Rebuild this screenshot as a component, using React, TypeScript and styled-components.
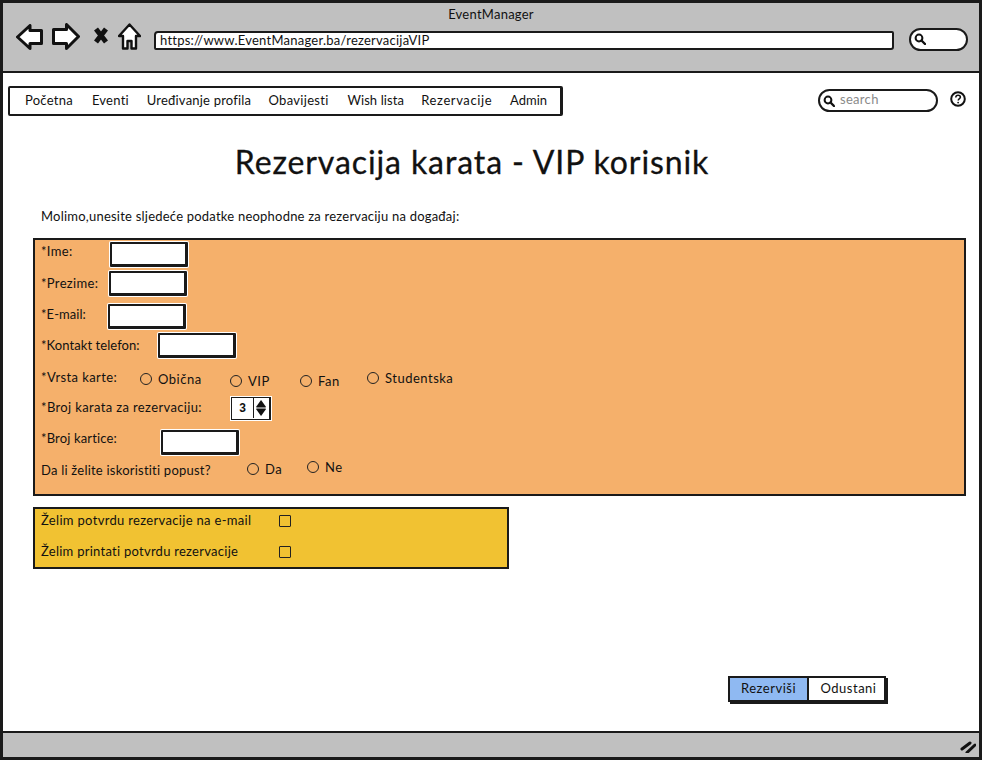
import styled, { createGlobalStyle } from "styled-components";

const GlobalStyle = createGlobalStyle`
  * {
    box-sizing: border-box;
  }
  body {
    margin: 0;
    overflow: hidden;
    background: #fff;
    font-family: "Lato", "Noto Sans", sans-serif;
    color: #111;
  }
`;

const Browser = styled.div`
  width: 982px;
  height: 760px;
  border: 3px solid #1a1a1a;
  display: flex;
  flex-direction: column;
`;
const Chrome = styled.header`
  height: 70px;
  background: #c0c0c0;
  border-bottom: 2px solid #1a1a1a;
  flex-shrink: 0;
`;
const WindowTitle = styled.div`
  text-align: center;
  font-size: 13px;
  line-height: 16px;
  padding-top: 3px;
  letter-spacing: 0.25px;
`;
const Toolbar = styled.div`
  display: flex;
  align-items: center;
  padding: 2px 10px 0 13px;
  height: 32px;
`;
const IconButton = styled.svg<{ $gap: number }>`
  flex-shrink: 0;
  margin: -5px ${(p) => p.$gap}px 0 0;
`;
const AddressBar = styled.div`
  width: 740px;
  height: 19px;
  margin: 3px 15px 0 0;
  background: #fff;
  border: 2px solid #1a1a1a;
  border-radius: 4px 2px 3px 2px;
  font-size: 13px;
  line-height: 14px;
  padding-left: 4px;
  letter-spacing: 0.24px;
  white-space: nowrap;
`;
const PillSearch = styled.div<{ $w: number }>`
  width: ${(p) => p.$w}px;
  height: 23px;
  background: #fff;
  border: 2px solid #1a1a1a;
  border-radius: 12px;
  display: flex;
  align-items: center;
  padding-left: 3px;
  gap: 5px;
  flex-shrink: 0;
`;
const SearchHint = styled.span`
  color: #8a8a8a;
  font-size: 13px;
  line-height: 16px;
  margin-top: -4px;
  letter-spacing: 0.3px;
`;
const Page = styled.main`
  flex: 1;
  background: #fff;
  display: flex;
  flex-direction: column;
  min-height: 0;
`;
const TopRow = styled.div`
  display: flex;
  align-items: flex-start;
  padding: 13px 0 0 5px;
`;
const Nav = styled.nav`
  width: 555px;
  height: 30px;
  border: 2px solid #1a1a1a;
  border-right-width: 3px;
  border-radius: 2px;
  display: flex;
  align-items: center;
  padding: 0 0 2px 15px;
  flex-shrink: 0;
  margin-right: 255px;
`;
const NavItem = styled.span<{ $w: number; $ls: number }>`
  width: ${(p) => p.$w}px;
  font-size: 13px;
  white-space: nowrap;
  letter-spacing: ${(p) => p.$ls}px;
`;
const HelpIcon = styled.svg`
  margin: 4px 0 0 12px;
  flex-shrink: 0;
`;
const SearchSlot = styled.div`
  margin-top: 3px;
`;
const Title = styled.h1`
  margin: 26px 0 0;
  padding-right: 38px;
  text-align: center;
  font-size: 32px;
  line-height: 40px;
  font-weight: 400;
  letter-spacing: 0.9px;
  -webkit-text-stroke: 0.3px #111;
`;
const Intro = styled.p`
  margin: 26px 0 14px 38px;
  font-size: 13px;
  line-height: 16px;
  letter-spacing: 0.22px;
`;
const Panel = styled.section<{ $bg: string; $w: number; $h: number; $mt?: number }>`
  margin: ${(p) => p.$mt ?? 0}px 0 0 30px;
  width: ${(p) => p.$w}px;
  height: ${(p) => p.$h}px;
  background: ${(p) => p.$bg};
  border: 2px solid #1a1a1a;
  padding-left: 6px;
  flex-shrink: 0;
`;
const FormRow = styled.div<{ $h: number }>`
  height: ${(p) => p.$h}px;
  display: flex;
  align-items: flex-start;
`;
const FieldLabel = styled.label<{ $w: number; $mt: number; $ls?: number }>`
  width: ${(p) => p.$w}px;
  margin-top: ${(p) => p.$mt}px;
  font-size: 13px;
  line-height: 16px;
  white-space: nowrap;
  letter-spacing: ${(p) => p.$ls ?? 0.32}px;
  flex-shrink: 0;
`;
const TextField = styled.div<{ $mt: number }>`
  width: 78px;
  height: 25px;
  margin-top: ${(p) => p.$mt}px;
  background: #fff;
  border: 2px solid #1a1a1a;
  border-right-width: 3px;
  border-bottom-width: 3px;
  box-shadow: 0 0 0 1px #fff;
  border-radius: 1px;
`;
const RadioOption = styled.span<{ $w?: number; $mt: number }>`
  width: ${(p) => (p.$w ? `${p.$w}px` : "auto")};
  margin-top: ${(p) => p.$mt}px;
  display: flex;
  align-items: center;
  gap: 6px;
  font-size: 13px;
  line-height: 16px;
  letter-spacing: 0.5px;
  white-space: nowrap;
`;
const RadioDot = styled.i`
  width: 12px;
  height: 12px;
  border: 1.5px solid #222;
  border-radius: 50%;
  flex-shrink: 0;
`;
const Stepper = styled.div`
  width: 40px;
  height: 23px;
  display: flex;
  background: #fff;
  border: 1.5px solid #1a1a1a;
  border-right-width: 2px;
  box-shadow: 0 0 0 1px #fff;
`;
const StepperValue = styled.span`
  flex: 1;
  text-align: center;
  font: 700 12px/20px "Liberation Sans", sans-serif;
`;
const StepperArrows = styled.svg`
  border-left: 1.5px solid #1a1a1a;
  flex-shrink: 0;
`;
const CheckBox = styled.i`
  width: 12px;
  height: 12px;
  margin-top: 6px;
  border: 1.5px solid #222;
  border-radius: 1px;
  flex-shrink: 0;
`;
const ButtonBar = styled.div`
  margin: 107px 0 0 725px;
  width: 158px;
  height: 26px;
  display: flex;
  border: 2px solid #1a1a1a;
  box-shadow: 2px 2px 0 #1a1a1a;
`;
const BarButton = styled.button<{ $primary?: boolean; $w: number }>`
  width: ${(p) => p.$w}px;
  padding: ${(p) => (p.$primary ? "0 0 2px" : "0 0 2px 4px")};
  border: 0;
  border-right: ${(p) => (p.$primary ? "2px solid #1a1a1a" : "0")};
  background: ${(p) => (p.$primary ? "#8fb9f2" : "#fff")};
  font-family: inherit;
  font-size: 13px;
  color: #111;
  letter-spacing: 0.5px;
`;
const StatusBar = styled.footer`
  height: 26px;
  background: #c0c0c0;
  border-top: 2px solid #1a1a1a;
  display: flex;
  justify-content: flex-end;
  align-items: center;
  padding-right: 3px;
  flex-shrink: 0;
`;

const Glass = ({ size = 12 }: { size?: number }) => (
  <svg width={size} height={size} viewBox="0 0 12 12" style={{ flexShrink: 0 }}>
    <circle cx="5" cy="5" r="3.4" fill="none" stroke="#111" strokeWidth="2" />
    <path d="M7.5 7.5L11 11" stroke="#111" strokeWidth="2.4" strokeLinecap="round" />
  </svg>
);

const Radio = ({ label, w, mt }: { label: string; w?: number; mt: number }) => (
  <RadioOption $w={w} $mt={mt}>
    <RadioDot />
    {label}
  </RadioOption>
);

const navItems = [
  { label: "Početna", w: 67, ls: 0.25 },
  { label: "Eventi", w: 55, ls: 0.25 },
  { label: "Uređivanje profila", w: 122, ls: 0.2 },
  { label: "Obavijesti", w: 79, ls: 0.3 },
  { label: "Wish lista", w: 74, ls: 0.1 },
  { label: "Rezervacije", w: 89, ls: 0.6 },
  { label: "Admin", w: 50, ls: 0 },
];

export default function App() {
  return (
    <>
      <GlobalStyle />
      <Browser>
        <Chrome>
          <WindowTitle>EventManager</WindowTitle>
          <Toolbar>
            <IconButton $gap={9} width="27" height="26" viewBox="0 0 27 26">
              <path d="M1.5 13L14 1.5V6.5H25.5V19.5H14V24.5Z" fill="#fff" stroke="#111" strokeWidth="3" strokeLinejoin="round" />
            </IconButton>
            <IconButton $gap={13} width="28" height="27" viewBox="0 0 28 27">
              <path d="M26.5 13.5L14.5 1.5V6.5H1.5V20.5H14.5V25.5Z" fill="#fff" stroke="#111" strokeWidth="3" strokeLinejoin="round" />
            </IconButton>
            <IconButton $gap={9} width="16" height="20" viewBox="0 0 16 20">
              <path d="M3 2L13 15M13 2L3 15" stroke="#111" strokeWidth="5" />
            </IconButton>
            <IconButton $gap={13} width="23" height="27" viewBox="0 0 23 27">
              <path d="M11.5 1.5L22 13H18V25.5H13.5V18H9.5V25.5H5V13H1Z" fill="#fff" stroke="#111" strokeWidth="2.4" strokeLinejoin="round" />
            </IconButton>
            <AddressBar>https://www.EventManager.ba/rezervacijaVIP</AddressBar>
            <PillSearch $w={59}>
              <Glass />
            </PillSearch>
          </Toolbar>
        </Chrome>
        <Page>
          <TopRow>
            <Nav>
              {navItems.map((item) => (
                <NavItem key={item.label} $w={item.w} $ls={item.ls}>
                  {item.label}
                </NavItem>
              ))}
            </Nav>
            <SearchSlot>
              <PillSearch $w={120}>
                <Glass />
                <SearchHint>search</SearchHint>
              </PillSearch>
            </SearchSlot>
            <HelpIcon width="16" height="18" viewBox="0 0 16 18">
              <circle cx="8" cy="9" r="6.8" fill="#fff" stroke="#111" strokeWidth="2" />
              <path d="M5.8 7.4C5.8 5.8 7 5.2 8.1 5.2C9.4 5.2 10.4 6 10.4 7.2C10.4 8.6 8.2 8.8 8.2 10.6" fill="none" stroke="#111" strokeWidth="1.5" />
              <circle cx="8.1" cy="12.6" r="0.9" fill="#111" />
            </HelpIcon>
          </TopRow>
          <Title>Rezervacija karata - VIP korisnik</Title>
          <Intro>Molimo,unesite sljedeće podatke neophodne za rezervaciju na događaj:</Intro>
          <Panel $bg="#f5b06b" $w={933} $h={258}>
            <FormRow $h={31}>
              <FieldLabel $w={69} $mt={3}>*Ime:</FieldLabel>
              <TextField $mt={2} />
            </FormRow>
            <FormRow $h={31}>
              <FieldLabel $w={68} $mt={4}>*Prezime:</FieldLabel>
              <TextField $mt={0} />
            </FormRow>
            <FormRow $h={31}>
              <FieldLabel $w={67} $mt={4} $ls={0.05}>*E-mail:</FieldLabel>
              <TextField $mt={2} />
            </FormRow>
            <FormRow $h={36}>
              <FieldLabel $w={117} $mt={4} $ls={0.07}>*Kontakt telefon:</FieldLabel>
              <TextField $mt={0} />
            </FormRow>
            <FormRow $h={28}>
              <FieldLabel $w={99} $mt={0} $ls={0.4}>*Vrsta karte:</FieldLabel>
              <Radio label="Obična" w={90} mt={2} />
              <Radio label="VIP" w={70} mt={4} />
              <Radio label="Fan" w={67} mt={4} />
              <Radio label="Studentska" mt={1} />
            </FormRow>
            <FormRow $h={33}>
              <FieldLabel $w={190} $mt={2} $ls={0.36}>*Broj karata za rezervaciju:</FieldLabel>
              <Stepper>
                <StepperValue>3</StepperValue>
                <StepperArrows width="16" height="20" viewBox="0 0 16 20">
                  <path d="M7.5 1.5L12.5 8.5V9.5H2.5V8.5Z" fill="#111" />
                  <path d="M7.5 18.5L12.5 11.5V10.5H2.5V11.5Z" fill="#111" />
                </StepperArrows>
              </Stepper>
            </FormRow>
            <FormRow $h={32}>
              <FieldLabel $w={120} $mt={0} $ls={0.15}>*Broj kartice:</FieldLabel>
              <TextField $mt={0} />
            </FormRow>
            <FormRow $h={30}>
              <FieldLabel $w={206} $mt={0} $ls={0.22}>Da li želite iskoristiti popust?</FieldLabel>
              <Radio label="Da" w={60} mt={-1} />
              <Radio label="Ne" mt={-3} />
            </FormRow>
          </Panel>
          <Panel $bg="#f1c232" $w={476} $h={62} $mt={11}>
            <FormRow $h={31}>
              <FieldLabel $w={238} $mt={3}>Želim potvrdu rezervacije na e-mail</FieldLabel>
              <CheckBox />
            </FormRow>
            <FormRow $h={29}>
              <FieldLabel $w={238} $mt={3} $ls={0.26}>Želim printati potvrdu rezervacije</FieldLabel>
              <CheckBox />
            </FormRow>
          </Panel>
          <ButtonBar>
            <BarButton $primary $w={79}>Rezerviši</BarButton>
            <BarButton $w={75}>Odustani</BarButton>
          </ButtonBar>
        </Page>
        <StatusBar>
          <svg width="16" height="16" viewBox="0 0 16 16">
            <path d="M2 12L10 6M7 15.5L15 8" stroke="#111" strokeWidth="3" strokeLinecap="round" />
          </svg>
        </StatusBar>
      </Browser>
    </>
  );
}
